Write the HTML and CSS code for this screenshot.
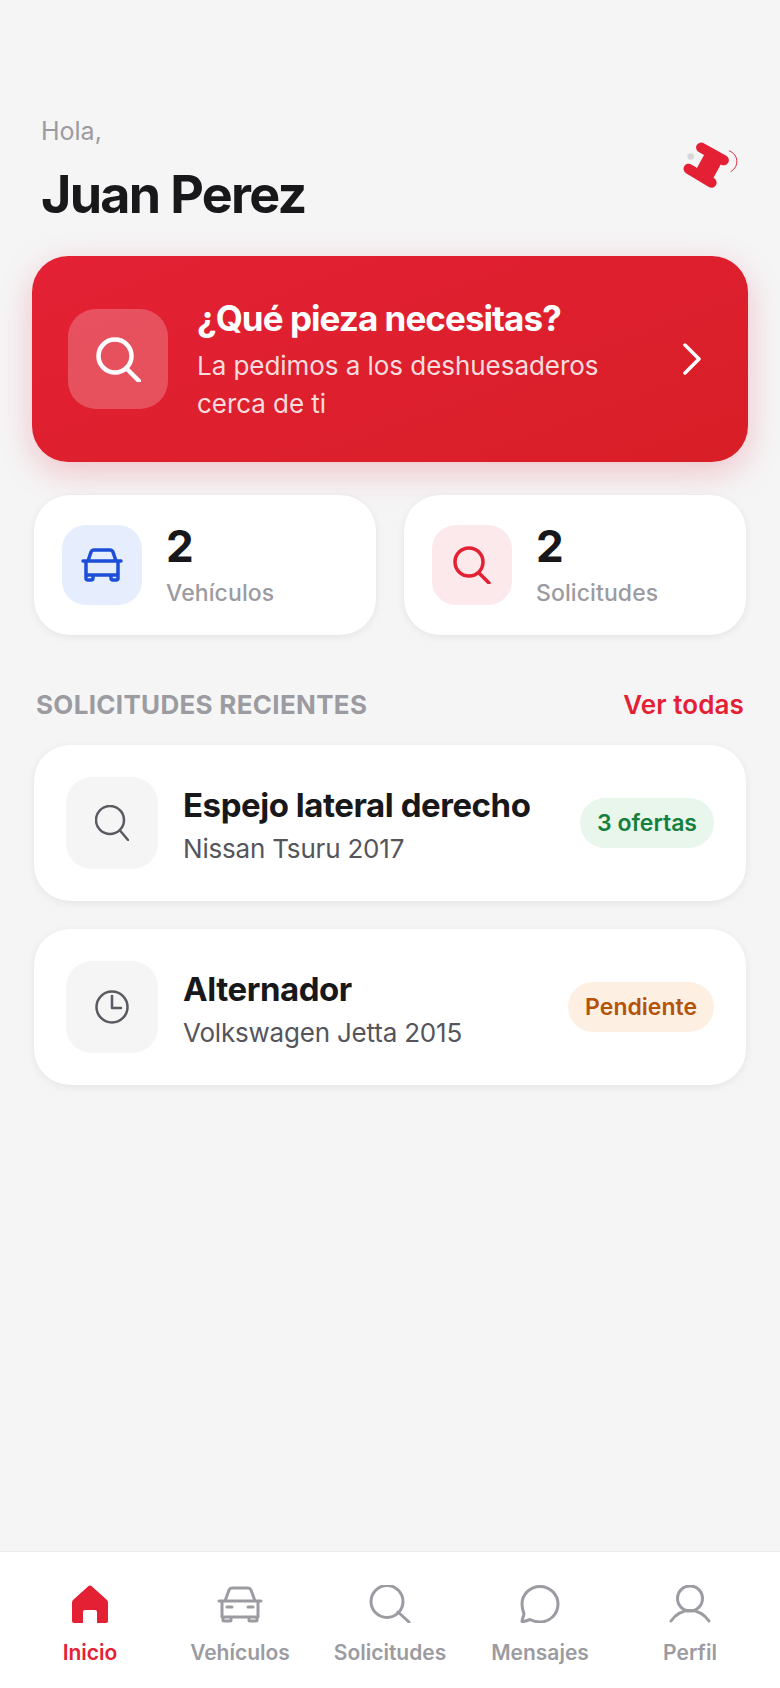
FILE: index.html
```html
<!DOCTYPE html>
<html lang="es">
<head>
    <meta charset="UTF-8">
    <meta name="viewport" content="width=device-width, initial-scale=1.0">
    <title>Inicio</title>
    <link rel="stylesheet" href="styles.css">
</head>
<body>
    <div class="main-content">
        <!-- Header -->
        <div class="header">
            <div>
                <p class="hello">Hola,</p>
                <h1>Juan Perez</h1>
            </div>
            <svg class="logo" viewBox="65 45 170 145">
                <circle class="logo-dot" cx="90" cy="95" r="10"/>
                <path class="logo-arc" d="M207 78 C235 88 238 125 212 140"/>
                <path class="logo-bar" d="M122 68 L190 106 M84 132 L153 174"/>
                <path class="logo-link" d="M165 88 L125 161"/>
            </svg>
        </div>

        <!-- Hero -->
        <div class="hero">
            <div class="hero-icon">
                <svg width="46" height="46" viewBox="0 0 46 46"><circle cx="20" cy="20" r="16.5"/><path d="M32 33 L44 45"/></svg>
            </div>
            <div class="hero-text">
                <h2>¿Qué pieza necesitas?</h2>
                <p>La pedimos a los deshuesaderos cerca de ti</p>
            </div>
            <svg class="chevron" width="20" height="32" viewBox="0 0 20 32"><path d="M3 2 L17 16 L3 30"/></svg>
        </div>

        <!-- Stats -->
        <div class="stats">
            <div class="card stat">
                <div class="stat-icon blue">
                    <svg width="42" height="34" viewBox="0 0 42 34"><path d="M7 13 L10 4 Q11 2 13 2 H29 Q31 2 32 4 L35 13 M2 13 H40 M5 13 V27 H37 V13 M5 27 V30 Q5 32 7 32 H10 Q12 32 12 30 V27 M30 27 V30 Q30 32 32 32 H35 Q37 32 37 30 V27"/></svg>
                </div>
                <div>
                    <div class="count">2</div>
                    <div class="stat-label">Vehículos</div>
                </div>
            </div>
            <div class="card stat">
                <div class="stat-icon pink">
                    <svg width="38" height="38" viewBox="0 0 38 38"><circle cx="16" cy="16" r="14"/><path d="M26 27 L36 37"/></svg>
                </div>
                <div>
                    <div class="count">2</div>
                    <div class="stat-label">Solicitudes</div>
                </div>
            </div>
        </div>

        <!-- Recent requests -->
        <div class="section-head">
            <span class="section-title">SOLICITUDES RECIENTES</span>
            <span class="see-all">Ver todas</span>
        </div>

        <div class="card request">
            <div class="request-icon">
                <svg width="34" height="36" viewBox="0 0 34 36"><circle cx="15" cy="15" r="14"/><path d="M25 25.5 L33 35"/></svg>
            </div>
            <div class="request-text">
                <h3>Espejo lateral derecho</h3>
                <p>Nissan Tsuru 2017</p>
            </div>
            <span class="badge green">3 ofertas</span>
        </div>

        <div class="card request">
            <div class="request-icon">
                <svg width="34" height="34" viewBox="0 0 34 34"><circle cx="17" cy="17" r="15.5"/><path d="M17 6 V18 H26"/></svg>
            </div>
            <div class="request-text">
                <h3>Alternador</h3>
                <p>Volkswagen Jetta 2015</p>
            </div>
            <span class="badge orange">Pendiente</span>
        </div>
    </div>

    <!-- Bottom nav -->
    <div class="bottom-nav">
        <a class="active">
            <svg width="38" height="38" viewBox="0 0 38 38"><path class="solid" d="M19 0.5 Q20 0.5 21 1.5 L36 15 Q37 16 37 18 V36 Q37 38 35 38 H26 V27 Q26 25 24 25 H14 Q12 25 12 27 V38 H3 Q1 38 1 36 V18 Q1 16 2 15 L17 1.5 Q18 0.5 19 0.5 Z"/></svg>
            Inicio
        </a>
        <a>
            <svg width="46" height="38" viewBox="0 0 46 38"><path d="M8 16 L12 5 Q13 3 15 3 H31 Q33 3 34 5 L38 16 M2 16 H44 M5 16 V32 H41 V16 M6 32 V35 Q6 36 7 36 H13 Q14 36 14 35 V32 M32 32 V35 Q32 36 33 36 H39 Q40 36 40 35 V32 M10 22 H15 M31 22 H36"/></svg>
            Vehículos
        </a>
        <a>
            <svg width="42" height="38" viewBox="0 0 42 38"><circle cx="18" cy="16.5" r="16"/><path d="M29 27 L40 37"/></svg>
            Solicitudes
        </a>
        <a>
            <svg width="42" height="38" viewBox="0 0 42 38"><path d="M21 1.5 C31 1.5 39 9.5 39 19 C39 29 31 37 21 37 C17 37 14 36 11 34.5 L4 37 Q3 37 3 36 L5 29 C4 26 3 23 3 19 C3 9.5 11 1.5 21 1.5 Z"/></svg>
            Mensajes
        </a>
        <a>
            <svg width="42" height="38" viewBox="0 0 42 38"><circle cx="21" cy="13.5" r="12.5"/><path d="M2 36 C7 29 14 25.5 21 25.5 C28 25.5 35 29 40 36"/></svg>
            Perfil
        </a>
    </div>
</body>
</html>
```
FILE: styles.css
```css
/* Reset styles */
* {
    margin: 0;
    padding: 0;
    box-sizing: border-box;
}

body {
    font-family: 'Inter', sans-serif;
    background-color: #f5f5f6;
    color: #18181b;
    display: flex;
    flex-direction: column;
    min-height: 100vh;
}

svg {
    fill: none;
    stroke: currentColor;
    stroke-linecap: round;
    stroke-linejoin: round;
    flex-shrink: 0;
}

.main-content {
    flex: 1;
    padding: 115px 34px 0;
}

/* Header */
.header {
    display: flex;
    justify-content: space-between;
    align-items: flex-start;
    padding: 0 7px;
    margin-bottom: 31px;
}

.hello {
    font-size: 25px;
    line-height: 32px;
    color: #9b9ba1;
    margin-bottom: 18px;
}

h1 {
    font-size: 52px;
    line-height: 60px;
    font-weight: 700;
    letter-spacing: -1.7px;
}

.logo {
    width: 57px;
    height: 48px;
    margin-top: 25px;
}

.logo-bar {
    stroke: #e32034;
    stroke-width: 31;
}

.logo-link {
    stroke: #e32034;
    stroke-width: 58;
    stroke-linecap: butt;
}

.logo-dot {
    fill: #d8d8da;
    stroke: none;
}

.logo-arc {
    stroke: #e32034;
    stroke-width: 3;
}

/* Hero */
.hero {
    display: flex;
    align-items: center;
    margin: 0 -2px 33px;
    height: 206px;
    padding: 0 46px 0 36px;
    border-radius: 36px;
    background: linear-gradient(160deg, #e42135, #d81e27);
    color: #fff;
    box-shadow: 0 10px 34px rgba(226, 32, 50, 0.24);
}

.hero-icon {
    width: 100px;
    height: 100px;
    border-radius: 28px;
    background-color: rgba(255, 255, 255, 0.22);
    display: flex;
    align-items: center;
    justify-content: center;
    margin-right: 29px;
    flex-shrink: 0;
}

.hero-icon svg {
    stroke-width: 4.5;
}

.hero-text {
    flex: 1;
}

.hero-text h2 {
    font-size: 35px;
    line-height: 44px;
    font-weight: 700;
    letter-spacing: -0.95px;
    margin-bottom: 7px;
}

.hero-text p {
    font-size: 26px;
    line-height: 38px;
    color: rgba(255, 255, 255, 0.85);
    width: 410px;
    letter-spacing: -0.05px;
}

.chevron {
    stroke-width: 3.5;
}

/* Cards */
.card {
    background-color: #fff;
    border-radius: 36px;
    box-shadow: 0 2px 8px rgba(0, 0, 0, 0.07);
}

.stats {
    display: grid;
    grid-template-columns: 1fr 1fr;
    gap: 28px;
    margin-bottom: 54px;
}

.stat {
    display: flex;
    align-items: center;
    height: 140px;
    padding: 0 28px;
    gap: 24px;
}

.stat-icon {
    width: 80px;
    height: 80px;
    border-radius: 24px;
    display: flex;
    align-items: center;
    justify-content: center;
}

.stat-icon svg {
    stroke-width: 3.5;
}

.blue {
    background-color: #e6edfd;
    color: #1d4ed8;
}

.pink {
    background-color: #fce9eb;
    color: #e32034;
}

.count {
    font-size: 44px;
    line-height: 48px;
    font-weight: 700;
    margin-bottom: 8px;
}

.stat-label {
    font-size: 23px;
    line-height: 30px;
    font-weight: 500;
    color: #9b9ba1;
    letter-spacing: 0.1px;
}

/* Recent requests */
.section-head {
    display: flex;
    justify-content: space-between;
    align-items: center;
    padding: 0 2px;
    margin-bottom: 24px;
}

.section-title {
    font-size: 26px;
    line-height: 32px;
    font-weight: 700;
    color: #9b9ba1;
    letter-spacing: 0.3px;
}

.see-all {
    font-size: 26px;
    line-height: 32px;
    font-weight: 600;
    color: #e32034;
    letter-spacing: 0.1px;
}

.request {
    display: flex;
    align-items: center;
    height: 156px;
    padding: 0 32px;
    margin-bottom: 28px;
}

.request-icon {
    width: 92px;
    height: 92px;
    border-radius: 26px;
    background-color: #f5f5f6;
    color: #5a5a60;
    display: flex;
    align-items: center;
    justify-content: center;
    margin-right: 25px;
}

.request-icon svg {
    stroke-width: 2.5;
}

.request-text {
    flex: 1;
    padding-top: 4px;
}

.request-text h3 {
    font-size: 33px;
    line-height: 40px;
    font-weight: 700;
    letter-spacing: -0.45px;
    margin-bottom: 7px;
}

.request-text p {
    font-size: 26px;
    line-height: 34px;
    color: #55555b;
    letter-spacing: -0.2px;
}

.badge {
    font-size: 23px;
    line-height: 50px;
    font-weight: 600;
    padding: 0 17px;
    border-radius: 25px;
}

.green {
    background-color: #e8f6ec;
    color: #15803d;
}

.orange {
    background-color: #fdf0e3;
    color: #b45309;
}

/* Bottom nav */
.bottom-nav {
    display: grid;
    grid-template-columns: repeat(5, 1fr);
    height: 137px;
    padding: 33px 15px 0;
    background-color: #fff;
    border-top: 1px solid #ececee;
}

.bottom-nav a {
    display: flex;
    flex-direction: column;
    align-items: center;
    font-size: 21px;
    line-height: 28px;
    font-weight: 600;
    color: #9b9ba1;
    gap: 16px;
}

.bottom-nav svg {
    stroke-width: 3;
}

.bottom-nav .active {
    color: #e32034;
}

.bottom-nav .solid {
    fill: currentColor;
    stroke: none;
}
```
